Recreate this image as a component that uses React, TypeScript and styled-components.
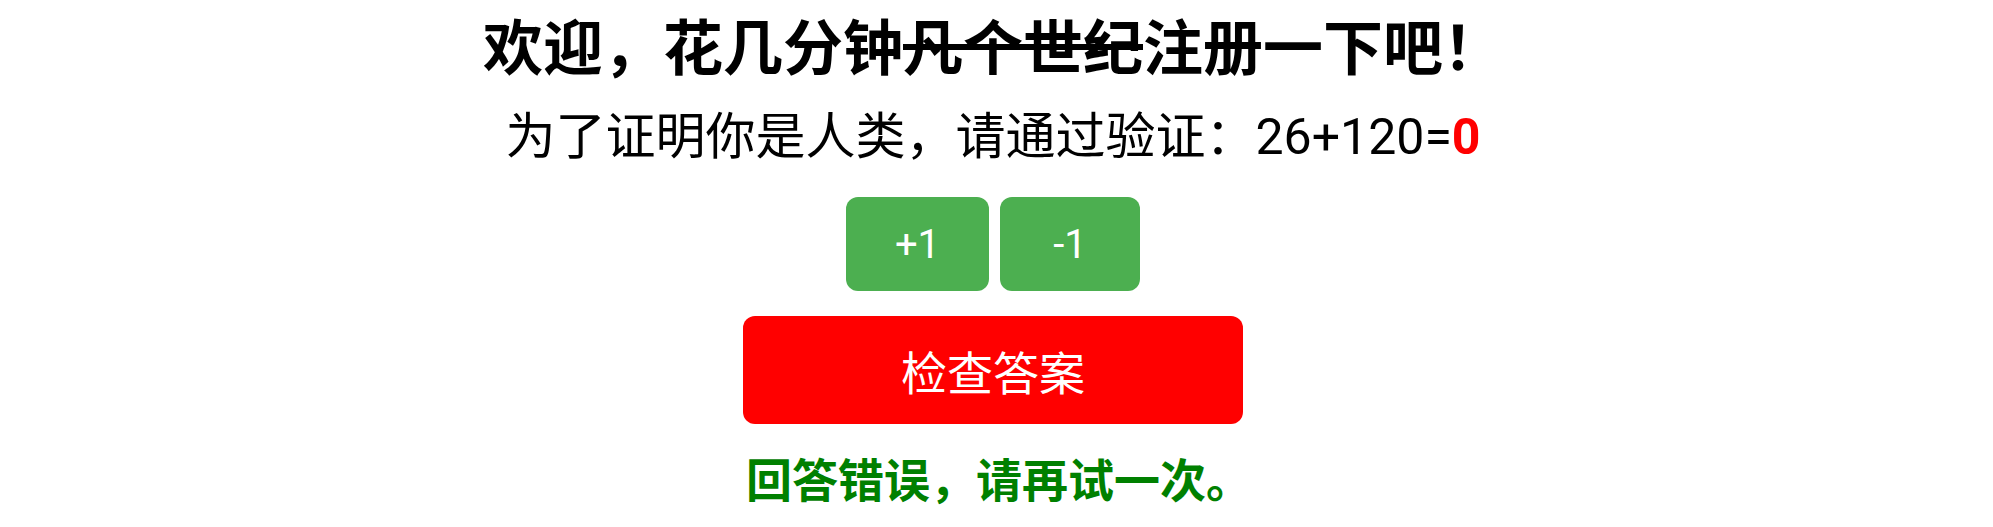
import { useState } from 'react'
import styled, { createGlobalStyle } from 'styled-components'

const GlobalStyle = createGlobalStyle`
  html, body {
    margin: 0;
    padding: 0;
    background: #fff;
  }
  body {
    font-family: Roboto, "Noto Sans CJK SC", "Noto Sans", sans-serif;
    color: #000;
  }
`

const A = 26
const B = 120

const App = () => {
  const [answer, setAnswer] = useState(0)
  const [checked, setChecked] = useState(true)

  const correct = answer === A + B

  return (
    <>
      <GlobalStyle />
      <Page>
        <Title>
          欢迎，花几分钟<Struck>凡个世纪</Struck>注册一下吧！
        </Title>
        <Question>
          为了证明你是人类，请通过验证：{A}+{B}=<Answer>{answer}</Answer>
        </Question>
        <StepRow>
          <StepButton onClick={() => setAnswer((v) => v + 1)}>+1</StepButton>
          <StepButton onClick={() => setAnswer((v) => v - 1)}>-1</StepButton>
        </StepRow>
        <CheckButton onClick={() => setChecked(true)}>检查答案</CheckButton>
        {checked && <Result $ok={correct}>{correct ? '回答正确！' : '回答错误，请再试一次。'}</Result>}
      </Page>
    </>
  )
}

const Page = styled.div`
  display: flex;
  flex-direction: column;
  align-items: center;
  padding-right: 7px;
`

const Title = styled.h1`
  margin: 0;
  font-size: 60px;
  font-weight: 700;
  line-height: normal;
  font-family: "Noto Sans CJK SC", sans-serif;
`

const Struck = styled.span`
  text-decoration: line-through;
`

const Question = styled.p`
  margin: 14px 0 0;
  font-size: 50px;
  line-height: 72px;
`

const Answer = styled.span`
  color: #ff0000;
  font-weight: 700;
`

const StepRow = styled.div`
  display: flex;
  gap: 11px;
  margin-top: 24px;
`

const StepButton = styled.button`
  min-width: 140px;
  height: 94px;
  padding: 0 49px;
  font-family: inherit;
  font-size: 40px;
  color: #fff;
  background: #4caf50;
  border: none;
  border-radius: 12px;
  cursor: pointer;
`

const CheckButton = styled.button`
  margin-top: 25px;
  width: 500px;
  height: 108px;
  font-family: inherit;
  font-size: 46px;
  color: #fff;
  background: #ff0000;
  border: none;
  border-radius: 12px;
  cursor: pointer;
`

const Result = styled.p<{ $ok: boolean }>`
  margin: 20px 0 0;
  padding-left: 12px;
  font-size: 46px;
  font-weight: 700;
  line-height: normal;
  font-family: "Noto Sans CJK SC", sans-serif;
  color: ${(p) => (p.$ok ? '#008000' : '#008000')};
`

export default App
